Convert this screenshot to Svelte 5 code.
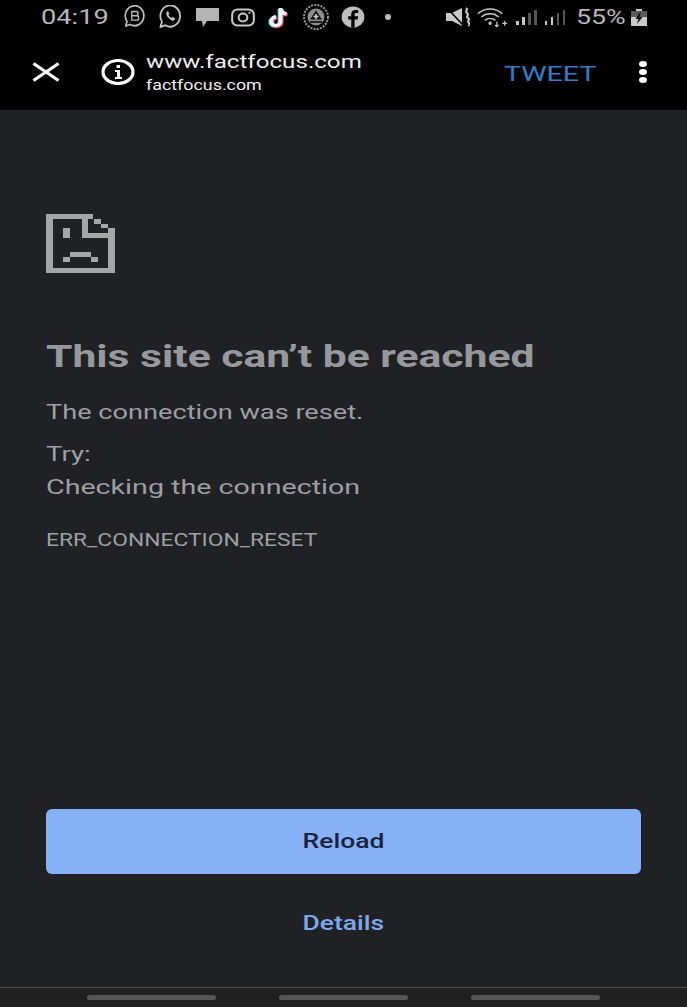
<script lang="ts">
  // Android status bar + Chrome custom tab showing the "site can't be reached" page
  const navPills = [0, 1, 2];
  const signals = [0, 1];
</script>

<div class="screen">
  <div class="status">
    <span class="clock wide">04:19</span>
    <div class="notif">
      <svg class="ic" width="26" height="24" viewBox="0 0 28 24" preserveAspectRatio="none" fill="none" stroke="#bdbdbd" stroke-width="1.8">
        <path d="M4 21l1.400-4.500a10 10 0 1 1 3.400 3z" stroke-linejoin="round" />
        <path d="M10.500 6.500h4.700a2 2 0 0 1 0 4.300h-4.700zM10.500 10.800h5.300a2.100 2.100 0 0 1 0 4.300h-5.300z" stroke-width="1.400" />
      </svg>
      <svg class="ic" width="26" height="24" viewBox="0 0 28 24" preserveAspectRatio="none" fill="none" stroke="#c4c4c4" stroke-width="1.9">
        <path d="M2.500 22l1.800-5.200a10.600 10.600 0 1 1 3.600 3.400z" stroke-linejoin="round" />
        <path d="M9.500 7.500c-1 1 0 3.600 2.200 5.600s4.400 3 5.600 2.100l1-1.400-2.800-1.700-1.100 1c-1.200-.5-2.600-1.800-3.300-3.200l.9-1.100-1.500-2.500z" fill="#c4c4c4" stroke-width=".6" />
      </svg>
      <svg class="ic" width="26" height="24" viewBox="0 0 26 24">
        <path d="M2 3h23v13H13l-4 6-1-6H2z" fill="#b4b4b4" />
      </svg>
      <svg class="ic" width="26" height="24" viewBox="0 0 24 24" preserveAspectRatio="none" fill="none" stroke="#c6c6c6" stroke-width="1.9">
        <rect x="2" y="4.500" width="20" height="16" rx="5" />
        <circle cx="12" cy="12.500" r="4" />
        <circle cx="18" cy="7.800" r=".8" fill="#c6c6c6" stroke-width=".6" />
      </svg>
      <svg class="ic" width="26" height="24" viewBox="0 0 24 24" preserveAspectRatio="none" fill="none" stroke-width="3.600">
        <path d="M13.500 3v13.200a4.300 4.300 0 1 1-4.300-4.300M13.500 3.500c.5 3 2.500 5 5.500 5.300" stroke="#25e0e8" transform="translate(-1 .8)" />
        <path d="M13.500 3v13.200a4.300 4.300 0 1 1-4.300-4.300M13.500 3.500c.5 3 2.500 5 5.500 5.300" stroke="#f2305a" transform="translate(1 1)" />
        <path d="M13.500 3v13.200a4.300 4.300 0 1 1-4.300-4.300M13.500 3.500c.5 3 2.500 5 5.500 5.300" stroke="#f4f4f4" />
      </svg>
      <svg class="ic" width="28" height="26" viewBox="0 0 28 26" fill="none">
        <circle cx="14" cy="13" r="12" stroke="#9a9a9a" stroke-width="2" stroke-dasharray="2 1.200" />
        <circle cx="14" cy="13" r="8.500" fill="#8d8d8d" />
        <path d="M14 6.500l6 9H8z" fill="#111" />
        <path d="M14 10v5M11.500 12.500h5" stroke="#d0d0d0" stroke-width="1.600" />
        <rect x="8" y="17" width="12" height="2" fill="#222" />
      </svg>
      <svg class="ic" width="26" height="24" viewBox="0 0 24 24" preserveAspectRatio="none">
        <circle cx="12" cy="12" r="10.500" fill="#bdbdbd" />
        <path d="M13.500 22.500v-8h2.700l.5-3.200h-3.200V9.400c0-1 .4-1.500 1.600-1.500h1.700V5.100c-.6-.1-1.500-.2-2.400-.2-2.500 0-4 1.400-4 4.100v2.300H7.600v3.200h2.800v8z" fill="#000" />
      </svg>
      <span class="dot"></span>
    </div>
    <div class="sys">
      <svg width="24" height="20" viewBox="0 0 24 20" fill="none">
        <path d="M0 6h6l2-1 8-4v18l-8-4-2-1H0z" fill="#c8c8c8" />
        <path d="M1 1l16 17" stroke="#000" stroke-width="1.600" />
        <path d="M20 1c3 2-2 3 1 5s-2 3 1 5-2 3 1 5-1 2 0 3" stroke="#cfcfcf" stroke-width="2" />
      </svg>
      <svg class="wifi" width="31" height="22" viewBox="0 0 32 22" fill="none" stroke="#c4c4c4" stroke-width="1.500">
        <path d="M1 7.500a19 19 0 0 1 25 0M4.500 11a14 14 0 0 1 18 0M8 14.500a9 9 0 0 1 11 0" />
        <circle cx="13.500" cy="17.500" r="1" fill="#c4c4c4" />
        <path d="M20.500 16v5M18.700 19.300l1.800 1.700 1.800-1.700M26 17.500h5M28.500 15v5" stroke-width="1.300" />
      </svg>
      {#each signals as s (s)}
        <div class="signal">
          <span class="b1"></span><span class="b2"></span><span class="b3"></span><span class="b4"></span>
        </div>
      {/each}
      <span class="pct wide">55%</span>
      <svg class="batt" width="16" height="17" viewBox="0 0 16 17">
        <path d="M5 0h6v2h5v15H0V2h5z" fill="#c8c8c8" />
        <path d="M0 2h16v6H0z" fill="#5c5c5c" />
        <path d="M10 2L4.500 10h3L6 15l5.500-7h-3z" fill="#111" />
      </svg>
    </div>
  </div>

  <header class="toolbar">
    <svg class="close" width="28" height="20" viewBox="0 0 28 20" stroke="#fff" stroke-width="3.200" fill="none">
      <path d="M1.500 1.500l25 17M26.500 1.500l-25 17" />
    </svg>
    <svg class="info" width="34" height="26" viewBox="0 0 34 26">
      <ellipse cx="17" cy="13" rx="15" ry="11.500" fill="none" stroke="#fff" stroke-width="3.200" />
      <path d="M14 11h5v7h2v2h-7v-2h2v-5h-2z" fill="#fff" />
      <rect x="15.500" y="6" width="3.500" height="3" fill="#fff" />
    </svg>
    <div class="titles">
      <div class="title"><span class="wide">www.factfocus.com</span></div>
      <div class="url"><span class="wide">factfocus.com</span></div>
    </div>
    <span class="tweet wide">TWEET</span>
    <div class="more"><span></span><span></span><span></span></div>
  </header>

  <main class="page">
    <svg class="sad" width="69" height="59" viewBox="0 0 69 59" fill="#a5a6a8">
      <path fill-rule="evenodd" d="M0 0h47v5H42v14h20v-5h7v45H0zM7 5v49h55V24H36V5z" />
      <rect x="48" y="5" width="7" height="5" />
      <rect x="55" y="10" width="7" height="4" />
      <rect x="17" y="14" width="7" height="10" />
      <rect x="24" y="38" width="21" height="5" />
      <rect x="17" y="43" width="7" height="5" />
      <rect x="45" y="43" width="7" height="5" />
    </svg>
    <h1 class="wide">This site can’t be reached</h1>
    <p class="reason"><span class="wide">The connection was reset.</span></p>
    <p class="try"><span class="wide">Try:</span></p>
    <p class="check"><span class="wide">Checking the connection</span></p>
    <p class="code"><span class="wide">ERR_CONNECTION_RESET</span></p>
    <div class="actions">
      <button class="reload"><span class="wide">Reload</span></button>
      <button class="details"><span class="wide">Details</span></button>
    </div>
  </main>

  <nav class="navbar">
    {#each navPills as p (p)}
      <span class="pill"></span>
    {/each}
  </nav>
</div>

<style>
  :global(body) {
    margin: 0;
    background: #202124;
  }
  .screen {
    width: 687px;
    height: 1007px;
    display: flex;
    flex-direction: column;
    overflow: hidden;
    font-family: Roboto, "Liberation Sans", Arial, sans-serif;
  }
  /* the source screenshot is stretched sideways, so the text is too */
  .wide {
    display: inline-block;
    white-space: nowrap;
    transform-origin: left center;
  }
  .status {
    height: 34px;
    background: #000;
    display: flex;
    align-items: center;
    padding: 0 40px 0 41px;
    box-sizing: border-box;
  }
  .clock {
    color: #b8b8b8;
    font-size: 20px;
    width: 81px;
    flex-shrink: 0;
    transform: scaleX(1.36);
  }
  .notif {
    display: flex;
    align-items: center;
    gap: 10px;
    flex: 1;
  }
  .ic {
    display: block;
  }
  .dot {
    width: 6px;
    height: 6px;
    border-radius: 50%;
    background: #bbb;
    margin-left: 9px;
  }
  .sys {
    display: flex;
    align-items: center;
  }
  .wifi {
    margin-left: 7px;
  }
  .signal {
    display: flex;
    align-items: flex-end;
    gap: 3.5px;
    height: 15px;
    margin-left: 8px;
  }
  .signal span {
    width: 2.5px;
    background: #555;
  }
  .signal .b1 {
    height: 4px;
    background: #c8c8c8;
  }
  .signal .b2 {
    height: 8px;
    background: #c8c8c8;
  }
  .signal .b3 {
    height: 12px;
  }
  .signal .b4 {
    height: 15px;
  }
  .pct {
    color: #b8b8b8;
    font-size: 20px;
    width: 49px;
    margin-left: 11px;
    transform: scaleX(1.34);
  }
  .batt {
    margin-left: 6px;
  }
  .toolbar {
    height: 76px;
    background: #000;
    display: flex;
    align-items: center;
    padding: 0 40px 0 32px;
    box-sizing: border-box;
  }
  .close {
    flex-shrink: 0;
  }
  .info {
    margin-left: 41px;
    flex-shrink: 0;
  }
  .titles {
    margin-left: 11px;
    flex: 1;
    color: #eee;
  }
  .title {
    font-size: 19px;
    line-height: 26px;
  }
  .title .wide {
    transform: scaleX(1.27);
  }
  .url {
    font-size: 15px;
    line-height: 22px;
    margin-top: -1px;
  }
  .url .wide {
    transform: scaleX(1.19);
  }
  .tweet {
    color: #2f7fcb;
    font-size: 21px;
    width: 90px;
    margin-right: 45px;
    margin-top: 3px;
    transform: scaleX(1.36);
  }
  .more {
    display: flex;
    flex-direction: column;
    gap: 2px;
  }
  .more span {
    width: 8px;
    height: 6px;
    border-radius: 50%;
    background: #fff;
  }
  .page {
    flex: 1;
    background: #202124;
    padding: 104px 46px 0;
    display: flex;
    flex-direction: column;
    box-sizing: border-box;
    min-height: 0;
  }
  .sad {
    display: block;
    flex-shrink: 0;
  }
  h1 {
    margin: 64px 0 0;
    font-size: 32px;
    line-height: 38px;
    font-weight: 700;
    color: #96989c;
    align-self: flex-start;
    transform: scaleX(1.332);
  }
  p {
    margin: 0;
    color: #9d9fa3;
    font-size: 21px;
    line-height: 26px;
  }
  .reason {
    margin-top: 24px;
  }
  .reason .wide {
    transform: scaleX(1.294);
  }
  .try {
    margin-top: 16px;
  }
  .try .wide {
    transform: scaleX(1.31);
  }
  .check {
    margin-top: 7px;
  }
  .check .wide {
    transform: scaleX(1.364);
  }
  .code {
    margin-top: 28px;
    font-size: 18px;
    line-height: 24px;
  }
  .code .wide {
    transform: scaleX(1.267);
  }
  .actions {
    margin-top: auto;
    display: flex;
    flex-direction: column;
    margin-bottom: 32px;
  }
  button {
    border: none;
    font-family: inherit;
    font-weight: 500;
    font-size: 21px;
    padding: 0;
  }
  button .wide {
    transform-origin: center;
    transform: scaleX(1.26);
  }
  .reload {
    height: 65px;
    background: #87b1f7;
    border-radius: 6px;
    color: #17233f;
    width: 595px;
    padding-bottom: 2px;
  }
  .details {
    height: 65px;
    margin-top: 16px;
    background: none;
    color: #7fa8ea;
  }
  .navbar {
    height: 20px;
    background: #202020;
    border-top: 1px solid #4d4d4f;
    box-sizing: border-box;
    display: flex;
    justify-content: center;
    align-items: center;
    gap: 63px;
  }
  .pill {
    width: 129px;
    height: 5px;
    border-radius: 3px;
    background: #565656;
  }
</style>
